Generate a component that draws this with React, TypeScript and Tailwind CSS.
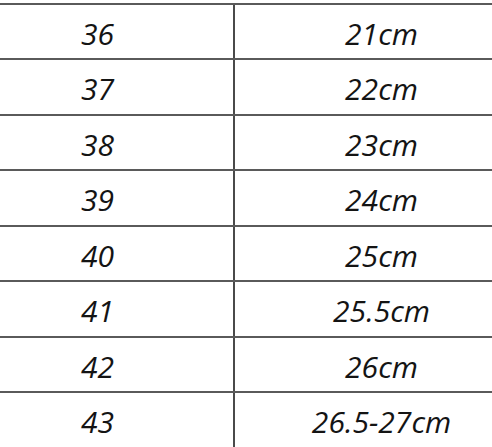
const ROWS: { size: string; length: string; h: string }[] = [
  { size: "36", length: "21cm", h: "h-[55px]" },
  { size: "37", length: "22cm", h: "h-[56px]" },
  { size: "38", length: "23cm", h: "h-[55px]" },
  { size: "39", length: "24cm", h: "h-[56px]" },
  { size: "40", length: "25cm", h: "h-[55px]" },
  { size: "41", length: "25.5cm", h: "h-[56px]" },
  { size: "42", length: "26cm", h: "h-[55px]" },
  { size: "43", length: "26.5-27cm", h: "h-[56px]" },
];

export default function App() {
  return (
    <div className="h-[447px] w-[492px] overflow-hidden bg-white">
      <div
        className="ml-[-38px] mt-[3px] w-[566px] border-t-2 border-[#5a5a5a] text-[30px] font-medium italic text-[#141414]"
        style={{ fontFamily: '"Open Sans", "Liberation Sans", sans-serif' }}
      >
        {ROWS.map((row) => (
          <div
            key={row.size}
            className={`flex ${row.h} box-border border-b-2 border-[#5a5a5a]`}
          >
            <div className="flex w-[273px] items-center justify-center border-r-2 border-[#4a4a4a] pt-[3px]">
              {row.size}
            </div>
            <div className="flex flex-1 items-center justify-center pt-[3px]">
              {row.length}
            </div>
          </div>
        ))}
      </div>
    </div>
  );
}
